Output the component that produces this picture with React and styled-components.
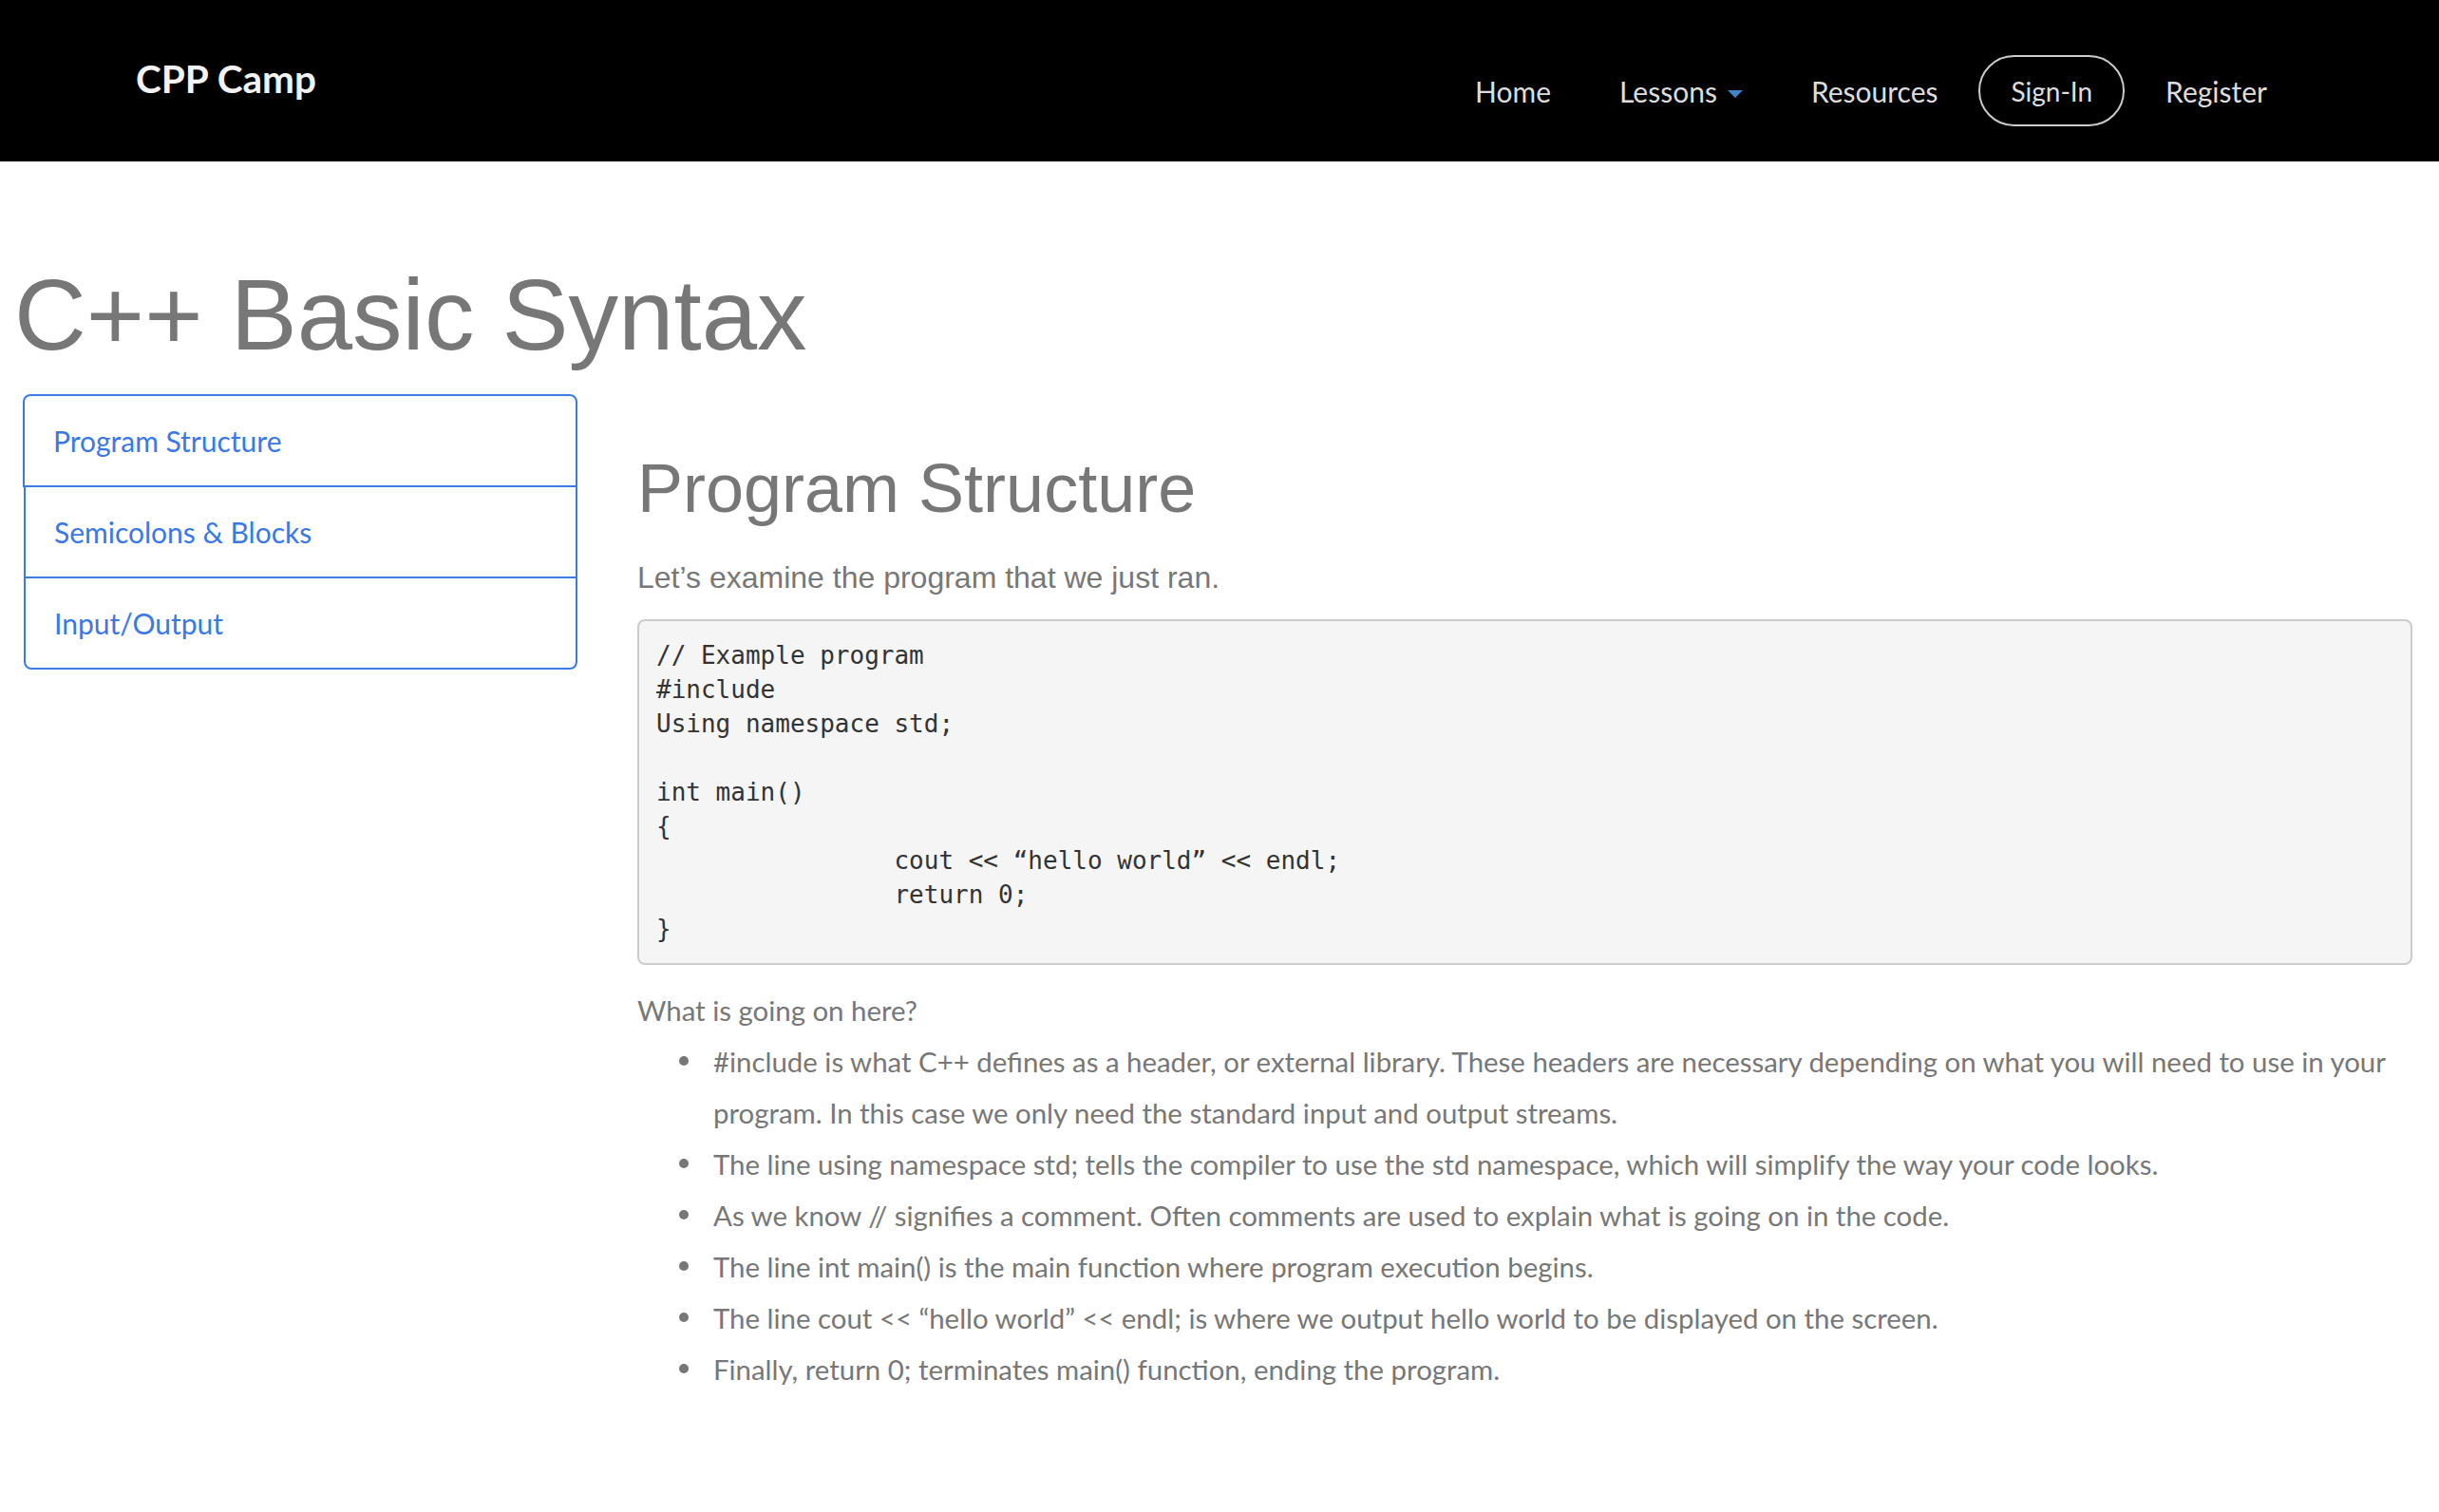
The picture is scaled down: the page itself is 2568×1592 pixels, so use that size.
import React from 'react';
import styled, { createGlobalStyle } from 'styled-components';

const GlobalStyle = createGlobalStyle`
  body {
    margin: 0;
    background: #ffffff;
    font-family: Lato, 'Open Sans', sans-serif;
    color: #777777;
  }
  * {
    box-sizing: border-box;
  }
`;

const Navbar = styled.nav`
  background: #000000;
  height: 170px;
  display: flex;
  justify-content: space-between;
  align-items: flex-start;
  padding: 0 145px 0 143px;
`;

const Brand = styled.a`
  margin-top: 58px;
  font-family: Lato, sans-serif;
  font-size: 40.5px;
  font-weight: 700;
  line-height: normal;
  color: #f2f2f2;
  text-decoration: none;
`;

const NavList = styled.ul`
  list-style: none;
  margin: 58px 0 0 0;
  padding: 0;
  height: 75px;
  display: flex;
  align-items: center;
`;

const NavLink = styled.a`
  display: flex;
  align-items: center;
  padding: 0 36px;
  font-size: 30px;
  line-height: normal;
  color: #dddddd;
  text-decoration: none;
`;

const Caret = styled.span`
  display: inline-block;
  width: 0;
  height: 0;
  margin-left: 11px;
  margin-top: 6px;
  border-top: 8px solid #3f84c4;
  border-left: 8px solid transparent;
  border-right: 8px solid transparent;
`;

const PillButton = styled.a`
  display: flex;
  align-items: center;
  height: 75px;
  margin: 0 7px;
  padding: 0 32px;
  border: 2px solid #cccccc;
  border-radius: 38px;
  font-size: 28px;
  color: #dddddd;
  text-decoration: none;
`;

const PageTitle = styled.h1`
  margin: 104px 0 25px 0;
  padding-left: 15px;
  font-family: 'Liberation Sans', Arial, sans-serif;
  font-size: 105px;
  font-weight: 400;
  line-height: 1.1;
  color: #777777;
`;

const Layout = styled.div`
  display: grid;
  grid-template-columns: 583px 1fr;
  column-gap: 63px;
  padding: 0 28px 80px 25px;
  align-items: start;
`;

const SideList = styled.div`
  display: flex;
  flex-direction: column;
`;

const SideItem = styled.a`
  display: flex;
  align-items: center;
  height: 98px;
  padding-left: 30px;
  border: 2px solid #3c7ae8;
  margin-top: -2px;
  font-size: 30px;
  color: #3a78e6;
  text-decoration: none;

  &:first-child {
    margin-top: 0;
    margin-left: -1px;
    border-radius: 8px 8px 0 0;
  }
  &:last-child {
    border-radius: 0 0 8px 8px;
  }
`;

const Content = styled.section`
  min-width: 0;
`;

const SectionTitle = styled.h2`
  margin: 60px 0 31px 0;
  font-family: 'Liberation Sans', Arial, sans-serif;
  font-size: 72px;
  font-weight: 400;
  line-height: 1.1;
  color: #777777;
`;

const Lead = styled.p`
  margin: 0 0 21px 0;
  font-family: 'Liberation Sans', Arial, sans-serif;
  font-size: 32px;
  line-height: 46px;
  color: #777777;
`;

const CodeBlock = styled.pre`
  margin: 0 0 21px 0;
  padding: 18px;
  background: #f5f5f5;
  border: 2px solid #cccccc;
  border-radius: 8px;
  font-family: 'DejaVu Sans Mono', 'Liberation Mono', monospace;
  font-size: 26px;
  line-height: 36px;
  color: #333333;
  white-space: pre;
`;

const Text = styled.p`
  margin: 0;
  font-size: 29.4px;
  line-height: 54px;
  color: #777777;
`;

const Bullets = styled.ul`
  list-style: none;
  margin: 0;
  padding-left: 80px;
`;

const Bullet = styled.li`
  position: relative;
  font-size: 29.4px;
  line-height: 54px;
  color: #777777;

  &::before {
    content: '';
    position: absolute;
    left: -36px;
    top: 21px;
    width: 10px;
    height: 10px;
    border-radius: 50%;
    background: #777777;
  }
`;

const code = `// Example program
#include
Using namespace std;

int main()
{
                cout << “hello world” << endl;
                return 0;
}`;

const points = [
  '#include is what C++ defines as a header, or external library. These headers are necessary depending on what you will need to use in your program. In this case we only need the standard input and output streams.',
  'The line using namespace std; tells the compiler to use the std namespace, which will simplify the way your code looks.',
  'As we know // signifies a comment. Often comments are used to explain what is going on in the code.',
  'The line int main() is the main function where program execution begins.',
  'The line cout << “hello world” << endl; is where we output hello world to be displayed on the screen.',
  'Finally, return 0; terminates main() function, ending the program.',
];

export default function App() {
  return (
    <>
      <GlobalStyle />
      <Navbar>
        <Brand href="#">CPP Camp</Brand>
        <NavList>
          <li><NavLink href="#">Home</NavLink></li>
          <li><NavLink href="#">Lessons<Caret /></NavLink></li>
          <li><NavLink href="#">Resources</NavLink></li>
          <li><PillButton href="#">Sign-In</PillButton></li>
          <li><NavLink href="#">Register</NavLink></li>
        </NavList>
      </Navbar>

      <PageTitle>C++ Basic Syntax</PageTitle>

      <Layout>
        <SideList>
          <SideItem href="#">Program Structure</SideItem>
          <SideItem href="#">Semicolons &amp; Blocks</SideItem>
          <SideItem href="#">Input/Output</SideItem>
        </SideList>

        <Content>
          <SectionTitle>Program Structure</SectionTitle>
          <Lead>Let’s examine the program that we just ran.</Lead>
          <CodeBlock>{code}</CodeBlock>
          <Text>What is going on here?</Text>
          <Bullets>
            {points.map((p) => (
              <Bullet key={p}>{p}</Bullet>
            ))}
          </Bullets>
        </Content>
      </Layout>
    </>
  );
}
